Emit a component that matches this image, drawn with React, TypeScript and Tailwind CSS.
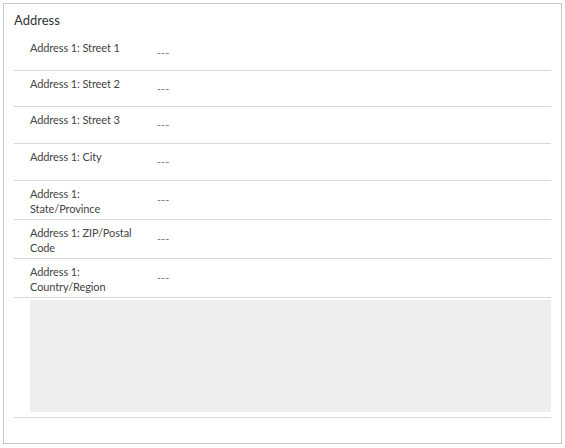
import React from "react";

interface Field {
  label: string;
  value: string;
  rowClass: string;
}

const fields: Field[] = [
  { label: "Address 1: Street 1", value: "---", rowClass: "h-[36px]" },
  { label: "Address 1: Street 2", value: "---", rowClass: "h-[36px]" },
  { label: "Address 1: Street 3", value: "---", rowClass: "h-[37px]" },
  { label: "Address 1: City", value: "---", rowClass: "h-[37px]" },
  { label: "Address 1: State/Province", value: "---", rowClass: "h-[39px]" },
  { label: "Address 1: ZIP/Postal Code", value: "---", rowClass: "h-[39px]" },
  { label: "Address 1: Country/Region", value: "---", rowClass: "h-[39px]" },
];

export default function App() {
  return (
    <div className="w-[565px] h-[448px] bg-white p-[3px] font-['Lato','Segoe_UI',sans-serif] text-[#333]">
      <div className="h-[441px] w-[559px] border border-[#c8c8c8] flex flex-col">
        <h2 className="pl-[10px] pt-[6px] h-[31px] text-[13px] leading-[20px] font-normal text-[#333]">
          Address
        </h2>
        <div className="ml-[10px] mr-[10px] flex flex-col">
          {fields.map((f) => (
            <div
              key={f.label}
              className={`flex border-b border-[#d8d8d8] ${f.rowClass}`}
            >
              <div className="w-[143px] shrink-0 pl-[16px] pr-[22px] pt-[5px] pb-[3px] text-[11px] leading-[15px] tracking-[-0.1px] text-[#444]">
                {f.label}
              </div>
              <div className="flex items-center text-[11px] leading-[16px] text-[#777]">
                {f.value}
              </div>
            </div>
          ))}
          <div className="pl-[16px] pt-[2px] pb-[5px] border-b border-[#d8d8d8]">
            <div className="h-[112px] bg-[#eeeeee]" />
          </div>
        </div>
      </div>
    </div>
  );
}
